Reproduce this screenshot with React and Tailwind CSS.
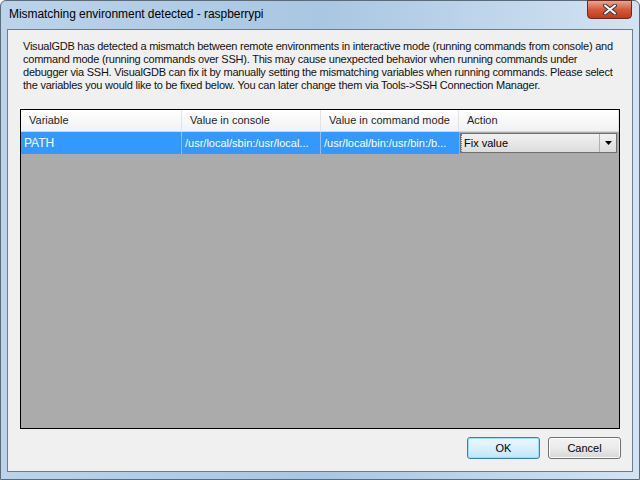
import React from "react";

const columns = [
  { label: "Variable", w: "w-[161px]" },
  { label: "Value in console", w: "w-[139px]" },
  { label: "Value in command mode", w: "w-[138px]" },
  { label: "Action", w: "flex-1" },
];

const message = [
  "VisualGDB has detected a mismatch between remote environments in interactive mode (running commands from console) and",
  "command mode (running commands over SSH). This may cause unexpected behavior when running commands under",
  "debugger via SSH. VisualGDB can fix it by manually setting the mismatching variables when running commands. Please select",
  "the variables you would like to be fixed below. You can later change them via Tools->SSH Connection Manager.",
];

const MismatchDialog = () => {
  return (
    <div className="w-[640px] h-[480px] flex flex-col bg-gradient-to-r from-[#bcd3ea] via-[#a9c6e2] to-[#d3e3f3] border border-[#5a6b7c] rounded-t-[6px] px-[6px] pb-[7px] font-['Liberation_Sans',sans-serif] text-black">
      {/* title bar */}
      <div className="h-[28px] flex flex-row items-start justify-between shrink-0">
        <div className="pl-[2px] pt-[6px] text-[12px] leading-[15px] tracking-[-0.05px]">
          Mismatching environment detected - raspberrypi
        </div>
        <button className="w-[45px] h-[19px] -mt-[1px] mr-[1px] rounded-b-[4px] border border-[#6b2a1f] bg-gradient-to-b from-[#e8a593] via-[#d45a3c] to-[#c2381a] flex items-center justify-center">
          <svg width="14" height="11" viewBox="0 0 14 11">
            <path d="M2 1.5 L12 9.5 M12 1.5 L2 9.5" stroke="#3b3b3b" strokeWidth="4" strokeLinecap="round" />
            <path d="M2 1.5 L12 9.5 M12 1.5 L2 9.5" stroke="#ffffff" strokeWidth="2" strokeLinecap="round" />
          </svg>
        </button>
      </div>

      {/* client area */}
      <div className="flex-1 flex flex-col bg-[#f0f0f0] border border-[#6d7c8c] text-[11px] leading-[13px]">
        <div className="mx-[15px] mt-[10px] text-[#101010] tracking-[-0.23px]">
          {message.map((line) => (
            <div key={line} className="whitespace-nowrap">{line}</div>
          ))}
        </div>

        {/* variables grid */}
        <div className="mx-[12px] mt-[17px] h-[320px] flex flex-col bg-[#ababab] border border-black">
          <div className="h-[22px] flex flex-row bg-gradient-to-b from-white to-[#f1f2f4] border-b border-[#d5d5d5]">
            {columns.map((c) => (
              <div key={c.label} className={`${c.w} flex items-center pl-[8px] border-r border-[#e3e3e3] text-[#1e1e1e]`}>
                {c.label}
              </div>
            ))}
          </div>
          <div className="h-[22px] flex flex-row text-white">
            <div className="w-[161px] flex items-center pl-[3px] bg-[#3399ff] border-r border-[#8cc2f5] text-[12px]">PATH</div>
            <div className="w-[139px] flex items-center pl-[3px] bg-[#3399ff] border-r border-[#8cc2f5] whitespace-nowrap overflow-hidden">
              /usr/local/sbin:/usr/local...
            </div>
            <div className="w-[138px] flex items-center pl-[3px] bg-[#3399ff] whitespace-nowrap overflow-hidden">
              /usr/local/bin:/usr/bin:/b...
            </div>
            <div className="flex-1 flex items-center pl-[1px] pr-[2px] py-[1px]">
              <div className="h-full flex-1 flex flex-row border border-[#707070] bg-gradient-to-b from-[#f2f2f2] to-[#dcdcdc] text-black">
                <div className="flex-1 flex items-center pl-[2px] border-l border-dotted border-l-[#777]">
                  Fix value
                </div>
                <div className="w-[17px] flex items-center justify-center border-l border-[#b0b0b0]">
                  <svg width="7" height="4" viewBox="0 0 7 4">
                    <path d="M0 0 H7 L3.5 4 Z" fill="#000" />
                  </svg>
                </div>
              </div>
            </div>
          </div>
        </div>

        {/* buttons */}
        <div className="flex flex-row justify-end gap-[8px] mt-[8px] mr-[11px]">
          <button className="w-[73px] h-[22px] rounded-[3px] border border-[#3c7fb1] bg-gradient-to-b from-[#eaf6fd] via-[#d9f0fc] to-[#bee6fd] shadow-[inset_0_0_0_1px_#9edcfa]">
            OK
          </button>
          <button className="w-[73px] h-[22px] rounded-[3px] border border-[#707070] bg-gradient-to-b from-[#f2f2f2] via-[#ebebeb] to-[#d6d6d6] shadow-[inset_0_0_0_1px_#fcfcfc]">
            Cancel
          </button>
        </div>
      </div>
    </div>
  );
};

export default function App() {
  return <MismatchDialog />;
}
